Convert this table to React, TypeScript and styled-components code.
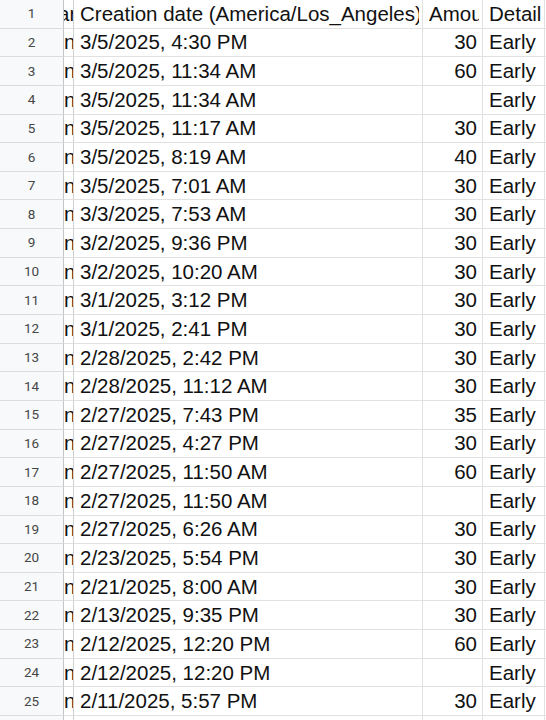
import React from "react";
import styled, { createGlobalStyle } from "styled-components";

const Global = createGlobalStyle`
  html, body { margin: 0; padding: 0; background: #fff; overflow: hidden; }
  body { font-family: "Liberation Sans", Arial, sans-serif; }
`;

const Sheet = styled.div`
  width: 546px;
  height: 720px;
  overflow: hidden;
  display: flex;
  flex-direction: column;
`;

const Row = styled.div`
  display: grid;
  grid-template-columns: 64px 10px 349px 60px 62px 1fr;
  height: 28.65px;
  flex: 0 0 28.65px;
`;

const RowHeader = styled.div`
  background: #f8f9fa;
  border-right: 1px solid #c4c7c5;
  border-bottom: 1px solid #dadce0;
  display: flex;
  align-items: center;
  justify-content: center;
  font-family: Roboto, "Liberation Sans", sans-serif;
  font-size: 13.5px;
  color: #444746;
  box-sizing: border-box;
  padding-bottom: 1px;
`;

const Cell = styled.div<{ $align?: "left" | "right"; $dark?: boolean }>`
  border-right: 1px solid ${(p) => (p.$dark ? "#cfd1d3" : "#e1e1e1")};
  border-bottom: 1px solid #e1e1e1;
  box-sizing: border-box;
  overflow: hidden;
  white-space: nowrap;
  display: flex;
  align-items: center;
  justify-content: ${(p) => (p.$align === "right" ? "flex-end" : "flex-start")};
  padding: ${(p) => (p.$align === "right" ? "0 5px 0 0" : "0 3px 0 6px")};
  font-size: 20.5px;
  color: #111;
  min-width: 0;
`;

const Text = styled.span`
  overflow: hidden;
  white-space: nowrap;
  min-width: 0;
`;

const ClippedCell = styled(Cell)`
  justify-content: flex-start;
  padding: 0;
`;

const Slice = styled.span<{ $shift: number }>`
  flex: none;
  white-space: nowrap;
  margin-left: ${(p) => p.$shift}px;
`;

type R = { date: string; amount: string };

const rows: R[] = [
  { date: "3/5/2025, 4:30 PM", amount: "30" },
  { date: "3/5/2025, 11:34 AM", amount: "60" },
  { date: "3/5/2025, 11:34 AM", amount: "" },
  { date: "3/5/2025, 11:17 AM", amount: "30" },
  { date: "3/5/2025, 8:19 AM", amount: "40" },
  { date: "3/5/2025, 7:01 AM", amount: "30" },
  { date: "3/3/2025, 7:53 AM", amount: "30" },
  { date: "3/2/2025, 9:36 PM", amount: "30" },
  { date: "3/2/2025, 10:20 AM", amount: "30" },
  { date: "3/1/2025, 3:12 PM", amount: "30" },
  { date: "3/1/2025, 2:41 PM", amount: "30" },
  { date: "2/28/2025, 2:42 PM", amount: "30" },
  { date: "2/28/2025, 11:12 AM", amount: "30" },
  { date: "2/27/2025, 7:43 PM", amount: "35" },
  { date: "2/27/2025, 4:27 PM", amount: "30" },
  { date: "2/27/2025, 11:50 AM", amount: "60" },
  { date: "2/27/2025, 11:50 AM", amount: "" },
  { date: "2/27/2025, 6:26 AM", amount: "30" },
  { date: "2/23/2025, 5:54 PM", amount: "30" },
  { date: "2/21/2025, 8:00 AM", amount: "30" },
  { date: "2/13/2025, 9:35 PM", amount: "30" },
  { date: "2/12/2025, 12:20 PM", amount: "60" },
  { date: "2/12/2025, 12:20 PM", amount: "" },
  { date: "2/11/2025, 5:57 PM", amount: "30" },
];

export default function App() {
  return (
    <>
      <Global />
      <Sheet>
        <Row>
          <RowHeader>1</RowHeader>
          <ClippedCell $dark>
            <Slice $shift={-6}>ar</Slice>
          </ClippedCell>
          <Cell>
            <Text>Creation date (America/Los_Angeles)</Text>
          </Cell>
          <Cell>
            <Text>Amount</Text>
          </Cell>
          <Cell>
            <Text>Details</Text>
          </Cell>
          <Cell />
        </Row>
        {rows.map((r, i) => (
          <Row key={i}>
            <RowHeader>{i + 2}</RowHeader>
            <ClippedCell $dark>
              <Slice $shift={0}>n</Slice>
            </ClippedCell>
            <Cell>
              <Text>{r.date}</Text>
            </Cell>
            <Cell $align="right">{r.amount}</Cell>
            <Cell>
              <Text>Early</Text>
            </Cell>
            <Cell />
          </Row>
        ))}
        <Row>
          <RowHeader>26</RowHeader>
          <ClippedCell $dark />
          <Cell />
          <Cell />
          <Cell />
          <Cell />
        </Row>
      </Sheet>
    </>
  );
}
